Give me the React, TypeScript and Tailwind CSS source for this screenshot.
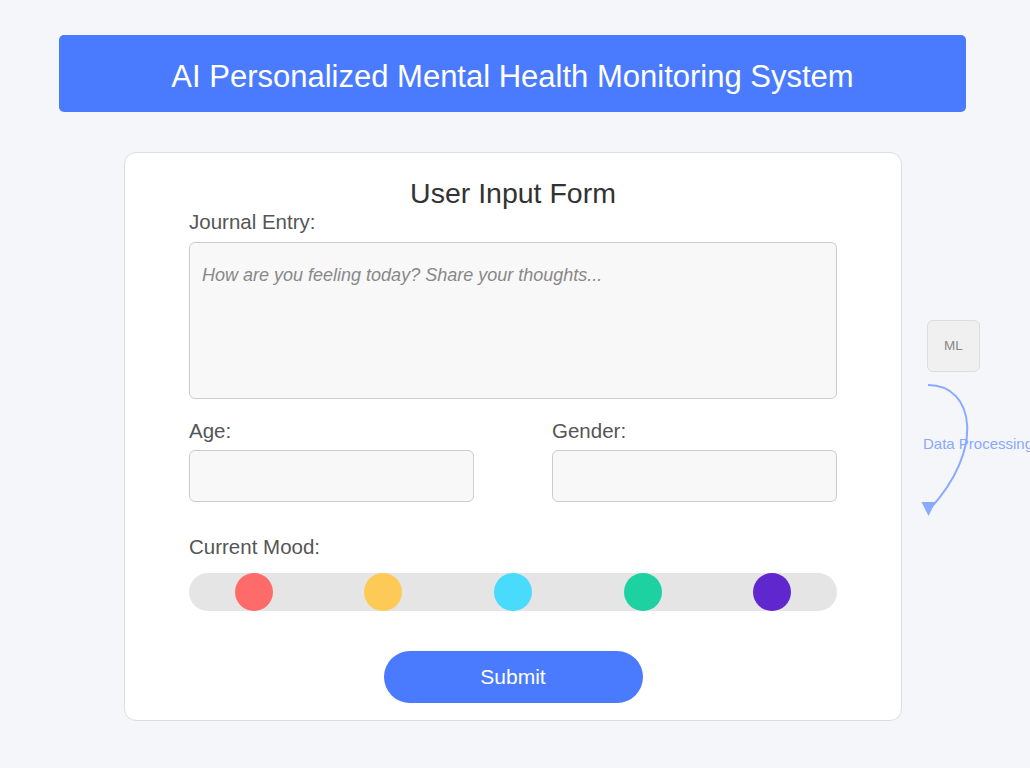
import React from "react";

const moods = ["#ff6b6b", "#feca57", "#48dbfb", "#1dd1a1", "#5f27cd"];

export default function App() {
  return (
    <div
      className="relative min-h-[768px] w-[1030px] overflow-hidden bg-[#f5f6fa] pt-[35px]"
      style={{ fontFamily: '"Liberation Sans", Arial, sans-serif' }}
    >
      <header className="ml-[59px] flex h-[77px] w-[907px] justify-center rounded-[5px] bg-[#4a7bff] pt-[24px]">
        <h1 className="text-[31px] leading-[36px] text-white">
          AI Personalized Mental Health Monitoring System
        </h1>
      </header>

      <div className="ml-[124px] mt-[40px] w-[778px] rounded-[12px] border border-[#dddddd] bg-white px-[64px] pb-[17px] pt-[25px]">
        <h2 className="text-center text-[28.5px] leading-[30px] text-[#333333]">User Input Form</h2>
        <label className="mt-[2px] block text-[20.5px] leading-[24px] text-[#555555]">Journal Entry:</label>
        <div className="mt-[8px] h-[157px] w-full rounded-[6px] border border-[#cccccc] bg-[#f8f8f8] px-[12px] pt-[21px]">
          <span className="text-[18px] italic leading-[21px] text-[#888888]">
            How are you feeling today? Share your thoughts...
          </span>
        </div>

        <div className="mt-[20px] flex gap-[78px]">
          <div className="flex-1">
            <label className="block text-[20.5px] leading-[24px] text-[#555555]">Age:</label>
            <div className="mt-[7px] h-[52px] rounded-[6px] border border-[#cccccc] bg-[#f8f8f8]" />
          </div>
          <div className="flex-1">
            <label className="block text-[20.5px] leading-[24px] text-[#555555]">Gender:</label>
            <div className="mt-[7px] h-[52px] rounded-[6px] border border-[#cccccc] bg-[#f8f8f8]" />
          </div>
        </div>

        <label className="mt-[33px] block text-[20.5px] leading-[24px] text-[#555555]">Current Mood:</label>
        <div className="mt-[14px] flex h-[38px] items-center justify-around rounded-full bg-[#e5e5e5]">
          {moods.map((c) => (
            <div key={c} className="h-[38px] w-[38px] rounded-full" style={{ backgroundColor: c }} />
          ))}
        </div>

        <div className="mt-[40px] flex justify-center">
          <button className="h-[52px] w-[259px] rounded-full bg-[#4a7bff] text-[21px] text-white">Submit</button>
        </div>
      </div>

      <div className="absolute left-[927px] top-[320px] flex h-[52px] w-[53px] items-center justify-center rounded-[6px] border border-[#dddddd] bg-[#f0f0f0] text-[13.5px] text-[#888888]">
        ML
      </div>

      <svg className="absolute left-0 top-0" width="1030" height="768" viewBox="0 0 1030 768" fill="none">
        <path d="M928 385 C 975 385, 985 450, 929 510" stroke="#8aaaff" strokeWidth="2" fill="none" />
        <polygon points="921.5,502 935.5,502 928.5,516" fill="#8aaaff" />
      </svg>

      <div className="absolute left-[923px] top-[435px] whitespace-nowrap text-[15px] leading-[18px] text-[#8aa8ff]">
        Data Processing
      </div>
    </div>
  );
}
